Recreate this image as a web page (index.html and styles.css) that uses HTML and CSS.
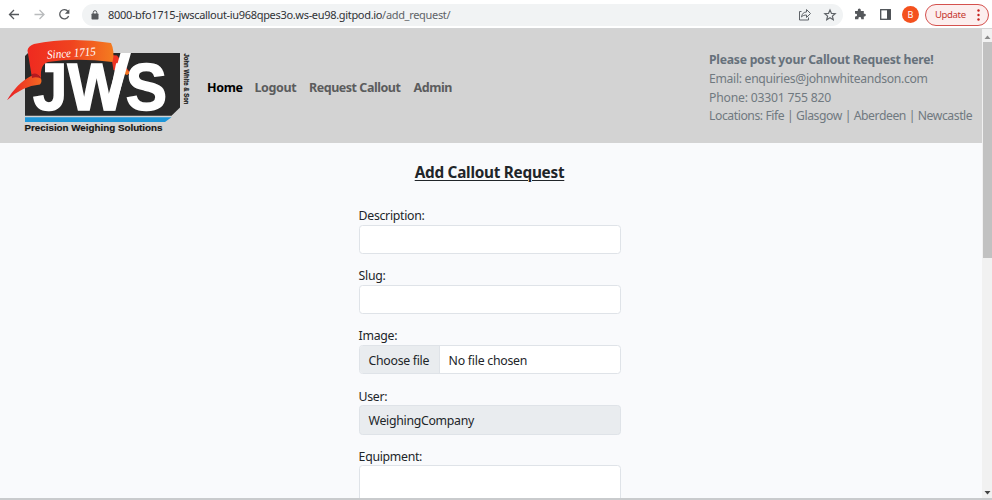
FILE: index.html
```html
<!DOCTYPE html>
<html lang="en">
<head>
<meta charset="utf-8">
<title>Add Callout Request</title>
<link rel="stylesheet" href="styles.css">
</head>
<body>
<div class="browser">
  <div class="toolbar">
    <svg class="nav-icons" viewBox="0 0 82 28" fill="none" stroke-width="1.3">
      <path d="M19 14.500H9.500M14 10l-4.500 4.500L14 19" stroke="#55585c"/>
      <path d="M34.500 14.500h9M39.500 10l4.500 4.500-4.500 4.500" stroke="#b9bbbd"/>
      <path d="M68 11.500A4.600 4.600 0 1 0 68.600 16" stroke="#55585c"/>
      <path d="M69.400 9.300v4.500h-4.500z" fill="#55585c"/>
    </svg>
    <div class="address">
      <svg class="lock" viewBox="0 0 8 10"><rect x=".5" y="3.500" width="7" height="6" rx=".8" fill="#55585c"/><path d="M2.200 4V2.500a1.800 1.800 0 0 1 3.600 0V4" fill="none" stroke="#55585c"/></svg>
      <span class="url"><span class="host">8000-bfo1715-jwscallout-iu968qpes3o.ws-eu98.gitpod.io</span><span class="path">/add_request/</span></span>
      <svg class="address-icons" viewBox="0 0 40 20" fill="none" stroke="#5f6368" stroke-width="1">
        <path d="M2.500 6.500H.5v8.500h9v-2.500M2.500 12c.5-3.500 2.500-5 5-5V4.500L11.500 8.500l-4 4V10c-2 0-3.700.5-5 2z"/>
        <path stroke-width="1.200" d="M31 5l1.500 3.400 3.700.3-2.800 2.400.9 3.600L31 12.800l-3.300 1.900.9-3.600-2.800-2.400 3.700-.3z"/>
      </svg>
    </div>
    <svg class="puzzle" viewBox="0 0 12 12"><path fill="#55585c" d="M1 3h2.800V2a1.500 1.500 0 0 1 3 0v1h3v2.700h.7a1.300 1.300 0 0 1 0 2.700h-.7v2.900H7.200v-.8a1.400 1.400 0 0 0-2.800 0v.8H1V8.500h.7a1.400 1.400 0 0 0 0-2.800H1z"/></svg>
    <svg class="panel" viewBox="0 0 11 11"><rect x=".7" y=".7" width="9.600" height="9.600" fill="none" stroke="#4c5054" stroke-width="1.300"/><path d="M7 1h3.500v9H7z" fill="#4c5054"/></svg>
    <div class="avatar">B</div>
    <div class="update"><span>Update</span><svg class="dots" viewBox="0 0 3 12" fill="#c5221f"><circle cx="1.500" cy="1.500" r="1.200"/><circle cx="1.500" cy="6" r="1.200"/><circle cx="1.500" cy="10.500" r="1.200"/></svg></div>
  </div>
  <div class="viewport">
    <div class="page">
      <header class="header">
        <svg class="logo" viewBox="0 30 200 113">
          <defs>
            <linearGradient id="ribbon"><stop offset="0" stop-color="#ef2a20"/><stop offset=".5" stop-color="#f0421f"/><stop offset="1" stop-color="#f47c20"/></linearGradient>
            <linearGradient id="tail"><stop offset="0" stop-color="#e81c24"/><stop offset="1" stop-color="#f46a22"/></linearGradient>
          </defs>
          <path d="M28 53H180v54.500l-8.500 8.200H25V56z" fill="#292929"/>
          <path d="M25 117.300h146.500l-6.500 4.600H25z" fill="#1d96d8"/>
          <path d="M7 100.300C13 90 21 81 32 75.500L40 77Q43 81 40 84.500Q22 86 7 100.300z" fill="url(#tail)"/>
          <path d="M111 55l6 .5 13 17-2.500 2-14-4.500z" fill="#ee3323"/>
          <path d="M122 65l8 8-3 2-7-3z" fill="#f47521"/>
          <text class="logo-letters" x="33" y="110.300" textLength="134" lengthAdjust="spacingAndGlyphs">JWS</text>
          <path d="M120.500 53H131L114.500 110.500H104z" fill="#fff"/>
          <path d="M27.500 50.500Q28 46 34 44Q70 36.500 111 43Q115 51 112.500 62Q76 57.500 48 62Q40 64 41 78Q36 72 31.500 75z" fill="url(#ribbon)"/>
          <path d="M31.500 75Q36 71 41 78.500Q36 76.500 32 78z" fill="#b51920"/>
          <text class="since" x="47" y="57" textLength="49" lengthAdjust="spacingAndGlyphs" transform="rotate(-4 71 54)">Since 1715</text>
          <text class="tagline" x="24.500" y="131" textLength="138" lengthAdjust="spacingAndGlyphs">Precision Weighing Solutions</text>
          <text class="side" transform="translate(183.500 53.500) rotate(90)" textLength="51" lengthAdjust="spacingAndGlyphs">John White &amp; Son</text>
        </svg>
        <nav class="menu">
          <a class="home">Home</a><a class="logout">Logout</a><a class="request">Request Callout</a><a class="admin">Admin</a>
        </nav>
        <div class="contact">
          <strong>Please post your Callout Request here!</strong>
          <span class="email">Email: enquiries@johnwhiteandson.com</span>
          <span class="phone">Phone: 03301 755 820</span>
          <span class="locations">Locations: Fife | Glasgow | Aberdeen | Newcastle</span>
        </div>
      </header>
      <main>
        <h1>Add Callout Request</h1>
        <form>
          <div class="field"><label>Description:</label><div class="input"></div></div>
          <div class="field"><label>Slug:</label><div class="input"></div></div>
          <div class="field"><label>Image:</label><div class="input"><span class="choose">Choose file</span><span class="filename">No file chosen</span></div></div>
          <div class="field"><label>User:</label><div class="input disabled">WeighingCompany</div></div>
          <div class="field"><label>Equipment:</label><div class="input area"></div></div>
        </form>
      </main>
    </div>
    <div class="scrollbar">
      <svg class="arrow" viewBox="0 0 10 12"><path d="M2.500 9h6l-3-3.500z" fill="#8b8b8b"/></svg>
      <div class="thumb"></div>
      <svg class="arrow down" viewBox="0 0 10 12"><path d="M2.500 5h6l-3 3.500z" fill="#444"/></svg>
    </div>
  </div>
</div>
</body>
</html>
```
FILE: styles.css
```css
* { box-sizing: border-box; }
body { margin: 0; font-family: "Noto Sans", sans-serif; color: #212529; }
.browser { width: 992px; height: 500px; display: flex; flex-direction: column; overflow: hidden; border-bottom: 2px solid #c9cbcd; background: #fff; }
.toolbar { flex: none; height: 29px; display: flex; align-items: center; border-bottom: 1px solid #d3d4d5; }
.nav-icons { width: 82px; height: 28px; flex: none; }
.address { width: 761px; height: 22px; display: flex; align-items: center; border-radius: 11px; background: #f1f3f4; margin-top: 1px; padding: 0 4px 0 9px; }
.lock { width: 8px; height: 10px; margin-right: 9px; }
.url { font-size: 11px; letter-spacing: -0.32px; color: #303236; white-space: nowrap; }
.path { color: #5f6368; }
.address-icons { width: 40px; height: 20px; margin-left: auto; }
.puzzle { width: 12px; height: 12px; margin-left: 11px; }
.panel { width: 11px; height: 11px; margin: 1px 0 0 14px; }
.avatar { width: 17px; height: 17px; margin: 1px 0 0 11px; border-radius: 50%; background: #f4511e; color: #fff; font-size: 9px; line-height: 17px; text-align: center; }
.update { width: 64px; height: 22px; margin: 1px 0 0 6px; padding: 0 8px 0 9px; display: flex; align-items: center; justify-content: space-between; border: 1px solid #d5514e; border-radius: 11px; background: #fceeee; color: #c5372f; font-size: 9.5px; letter-spacing: -0.35px; }
.dots { width: 3px; height: 12px; }
.viewport { flex: 1; min-height: 0; display: flex; }
.page { width: 982px; overflow: hidden; background: #f9fafc; }
.header { height: 114px; display: flex; background: #d3d3d3; }
.logo { width: 200px; height: 113px; margin-top: 1px; flex: none; }
.logo-letters { font: bold 66px "Liberation Sans", sans-serif; fill: #fff; stroke: #fff; stroke-width: 1.6px; }
.since { font: italic 12px "Liberation Serif", serif; fill: #fff; }
.tagline { font: bold 9.8px "Liberation Sans", sans-serif; fill: #171717; stroke: #171717; stroke-width: .2px; }
.side { font: bold 6.5px "Liberation Sans", sans-serif; fill: #171717; stroke: #171717; stroke-width: .2px; }
.menu { display: flex; padding: 49px 0 0 7px; font-size: 12.5px; line-height: 20px; font-weight: 700; color: #5b5c5d; white-space: nowrap; }
.menu .home { width: 47.5px; letter-spacing: -0.35px; color: #000; }
.menu .logout { width: 54.5px; letter-spacing: -0.4px; }
.menu .request { width: 104.5px; letter-spacing: -0.47px; }
.menu .admin { letter-spacing: -0.45px; }
.contact { margin-left: auto; width: 273px; padding-top: 22px; display: flex; flex-direction: column; font-size: 12.2px; line-height: 18.8px; color: #707980; white-space: nowrap; }
.contact strong { color: #66717b; letter-spacing: -0.24px; }
.email { letter-spacing: -0.31px; }
.phone { letter-spacing: -0.2px; }
.locations { letter-spacing: -0.43px; }
h1 { width: 979px; margin: 18px 0 0; text-align: center; font-size: 15.3px; line-height: 23px; letter-spacing: -0.25px; text-decoration: underline; text-underline-offset: 2px; text-decoration-thickness: 1px; }
form { width: 262px; margin: 22px 0 0 358.6px; font-size: 12.3px; letter-spacing: -0.3px; }
.field { height: 60.2px; }
label { display: block; height: 18.5px; line-height: 20px; }
.input { height: 29.5px; display: flex; align-items: center; border: 1px solid #dfe3e8; border-radius: 3.5px; background: #fff; overflow: hidden; white-space: nowrap; }
.choose { height: 100%; width: 80px; padding-left: 9px; line-height: 29px; background: #e9ecef; border-right: 1px solid #dfe3e8; }
.filename { height: 100%; padding-left: 9px; line-height: 29px; letter-spacing: -0.25px; }
.disabled { background: #e9ecef; padding: 1px 0 0 9px; }
.area { height: 60px; }
.scrollbar { width: 10px; background: #f1f1f1; display: flex; flex-direction: column; }
.arrow { width: 10px; height: 12px; margin-top: 1px; }
.thumb { height: 216px; margin-left: 1px; background: #c1c1c1; }
.down { margin-top: auto; }
```
